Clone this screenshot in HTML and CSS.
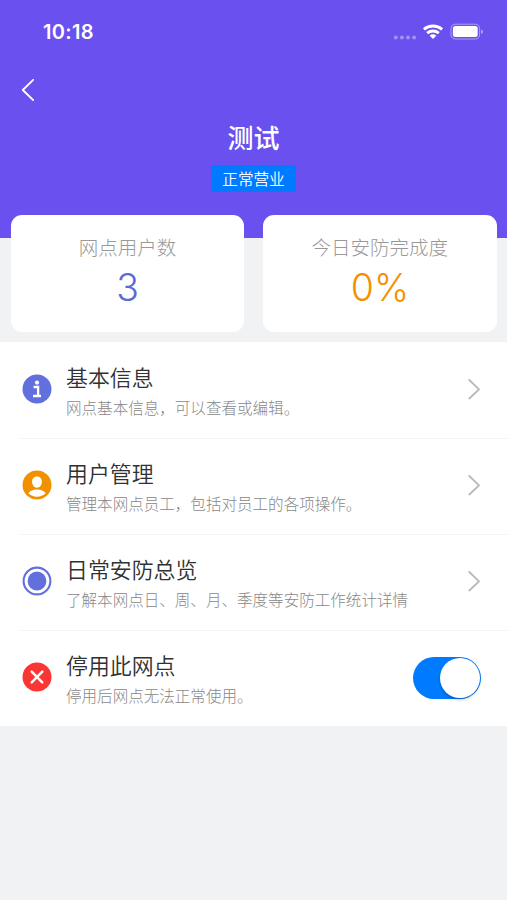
FILE: index.html
```html
<!DOCTYPE html>
<html lang="zh-CN">
<head>
<meta charset="utf-8">
<title>测试</title>
<link rel="stylesheet" href="styles.css">
</head>
<body>
<header class="header">
  <div class="status">
    <span class="time">10:18</span>
    <svg class="signals" width="92" height="20" viewBox="0 0 92 20">
      <g fill="#fff" opacity=".36"><circle cx="3.8" cy="15.4" r="2"/><circle cx="9.9" cy="15.4" r="2"/><circle cx="16" cy="15.4" r="2"/><circle cx="22.1" cy="15.4" r="2"/></g>
      <g fill="none" stroke="#fff" stroke-width="2.9"><path d="M31.9 7.3a14 14 0 0 1 18.2 0"/><path d="M35.2 11.1a9 9 0 0 1 11.6 0"/></g>
      <path d="M37.7 13.7a4.5 4.5 0 0 1 6.6 0L41 17z" fill="#fff"/>
      <rect x="59" y="2.2" width="28.6" height="14.8" rx="4.2" fill="none" stroke="#fff" opacity=".45"/>
      <rect x="60.9" y="4.1" width="24.8" height="11" rx="2.5" fill="#fff"/>
      <path d="M89.2 7.4q1.9.7 1.9 2.3t-1.9 2.3z" fill="#fff" opacity=".5"/>
    </svg>
  </div>
  <nav class="nav">
    <svg width="14" height="24" viewBox="0 0 14 24"><path d="M13.2 1.9 2.8 12l10.4 10.1" fill="none" stroke="#fff" stroke-width="1.9" stroke-linecap="round" stroke-linejoin="round"/></svg>
  </nav>
  <h1 class="name">测试</h1>
  <span class="tag">正常营业</span>
</header>
<section class="stats">
  <div class="card"><span class="label">网点用户数</span><span class="value">3</span></div>
  <div class="card"><span class="label">今日安防完成度</span><span class="value orange">0%</span></div>
</section>
<main class="list">
  <div class="row">
    <svg class="icon" width="30" height="30" viewBox="0 0 30 30"><circle cx="15" cy="15" r="14.5" fill="#6270de"/><circle cx="15" cy="8.6" r="2.1" fill="#fff"/><path d="M11.6 13h4.5v8.5M11 22h8" fill="none" stroke="#fff" stroke-width="2.3"/></svg>
    <div class="text"><h2>基本信息</h2><p>网点基本信息，可以查看或编辑。</p></div>
    <svg class="arrow" width="14" height="22" viewBox="0 0 14 22"><path d="m2.3 2 9.7 9.4-9.7 9.1"/></svg>
  </div>
  <div class="row">
    <svg class="icon" width="30" height="30" viewBox="0 0 30 30"><circle cx="15" cy="15" r="14.5" fill="#f29100"/><path d="M15 6.6c3 0 4.9 2.2 4.9 5.1 0 3.2-2.1 6-4.9 6s-4.9-2.8-4.9-6c0-2.9 1.9-5.1 4.9-5.1M6.4 23.3C8.1 20.7 11 19.6 15 19.6s6.9 1.1 8.6 3.7C21.3 25.5 18.3 26.7 15 26.7S8.7 25.5 6.4 23.3z" fill="#fff"/></svg>
    <div class="text"><h2>用户管理</h2><p>管理本网点员工，包括对员工的各项操作。</p></div>
    <svg class="arrow" width="14" height="22" viewBox="0 0 14 22"><path d="m2.3 2 9.7 9.4-9.7 9.1"/></svg>
  </div>
  <div class="row">
    <svg class="icon" width="30" height="30" viewBox="0 0 30 30"><circle cx="15" cy="15" r="13.4" fill="#fff" stroke="#6270de" stroke-width="2.1"/><circle cx="15" cy="15" r="9.4" fill="#6270de"/></svg>
    <div class="text"><h2>日常安防总览</h2><p>了解本网点日、周、月、季度等安防工作统计详情</p></div>
    <svg class="arrow" width="14" height="22" viewBox="0 0 14 22"><path d="m2.3 2 9.7 9.4-9.7 9.1"/></svg>
  </div>
  <div class="row">
    <svg class="icon" width="30" height="30" viewBox="0 0 30 30"><circle cx="15" cy="15" r="14.5" fill="#fa3534"/><path d="m9.7 9.7 10.6 10.6M20.3 9.7 9.7 20.3" stroke="#fff" stroke-width="2.5" stroke-linecap="round"/></svg>
    <div class="text"><h2>停用此网点</h2><p>停用后网点无法正常使用。</p></div>
    <div class="switch"><div class="knob"></div></div>
  </div>
</main>
</body>
</html>
```
FILE: styles.css
```css
* { box-sizing: border-box; margin: 0; }
body {
  min-height: 900px;
  background: #f0f2f4;
  font-family: "Noto Sans CJK SC", sans-serif;
}
svg { display: block; flex: none; }
.header {
  height: 238px;
  background: #6a50ee;
  color: #fff;
  display: flex;
  flex-direction: column;
  align-items: center;
}
.status {
  width: 100%;
  height: 64px;
  padding: 0 23px 0 43px;
  display: flex;
  align-items: center;
  justify-content: space-between;
}
.time { font: 600 20px/24px Inter, sans-serif; letter-spacing: .3px; }
.nav { width: 100%; height: 53px; padding: 14px 20px 0; }
.name { font-size: 26px; line-height: 40px; font-weight: 500; }
.tag {
  width: 85px;
  height: 27px;
  margin-top: 8px;
  border-radius: 4px;
  background: #007aff;
  font-size: 15.6px;
  line-height: 27px;
  font-weight: 350;
  text-align: center;
}
.stats {
  display: grid;
  grid-template-columns: 1fr 1fr;
  gap: 19px;
  margin: -23px 10.5px 10px 11px;
}
.card {
  height: 117px;
  border-radius: 11px;
  background: #fff;
  display: flex;
  flex-direction: column;
  align-items: center;
  padding-top: 17px;
}
.label { font-size: 19.5px; line-height: 30px; font-weight: 300; color: #999; }
.value { font: 270 37.5px/46px Inter, sans-serif; margin-top: 3px; color: #5a6ad8; }
.orange { color: #f29100; }
.list { background: #fff; }
.row {
  height: 96px;
  margin-left: 20px;
  padding: 0 26px 2px 2px;
  display: flex;
  align-items: center;
}
.row:not(:last-child) { box-shadow: 0 1px #f3f3f4; }
.text { flex: 1; margin: 2px 0 0 14px; }
h2 { font-size: 21.9px; line-height: 32px; font-weight: 350; color: #303133; }
p { font-size: 15.55px; line-height: 24px; font-weight: 300; color: #888; margin-top: 2px; white-space: nowrap; }
.arrow { fill: none; stroke: #b8b8bb; stroke-width: 1.8; stroke-linecap: round; stroke-linejoin: round; }
.switch {
  width: 68px;
  height: 42px;
  margin-top: 2px;
  padding: 1px;
  border-radius: 21px;
  background: #007aff;
  display: flex;
  justify-content: flex-end;
}
.knob {
  width: 40px;
  height: 40px;
  border-radius: 50%;
  background: #fff;
  box-shadow: 0 2px 3px rgba(0, 0, 0, .2);
}
```
